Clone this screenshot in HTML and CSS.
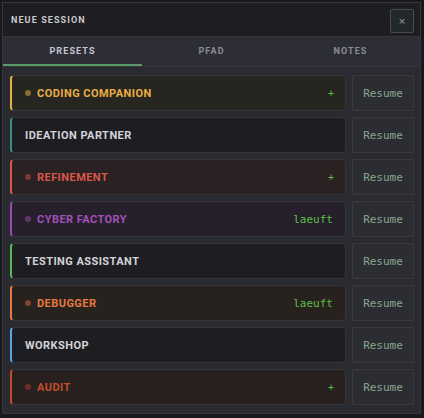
FILE: index.html
```html
<!DOCTYPE html>
<html lang="de">
<head>
<meta charset="utf-8">
<title>Neue Session</title>
<link rel="stylesheet" href="styles.css">
</head>
<body>
<div class="backdrop">
  <section class="modal">
    <header class="modal-head">
      <h2 class="modal-title">NEUE SESSION</h2>
      <button class="close-btn" aria-label="Schliessen">×</button>
    </header>
    <nav class="tabs">
      <div class="tab active">PRESETS</div>
      <div class="tab">PFAD</div>
      <div class="tab">NOTES</div>
    </nav>
    <div class="preset-list">
      <div class="row">
        <div class="card c-yellow"><span class="dot"></span><span class="name">CODING COMPANION</span><span class="status plus">+</span></div>
        <button class="resume">Resume</button>
      </div>
      <div class="row">
        <div class="card c-teal"><span class="name">IDEATION PARTNER</span></div>
        <button class="resume">Resume</button>
      </div>
      <div class="row">
        <div class="card c-red"><span class="dot"></span><span class="name">REFINEMENT</span><span class="status plus">+</span></div>
        <button class="resume">Resume</button>
      </div>
      <div class="row">
        <div class="card c-purple"><span class="dot"></span><span class="name">CYBER FACTORY</span><span class="status">laeuft</span></div>
        <button class="resume">Resume</button>
      </div>
      <div class="row">
        <div class="card c-green"><span class="name">TESTING ASSISTANT</span></div>
        <button class="resume">Resume</button>
      </div>
      <div class="row">
        <div class="card c-orange"><span class="dot"></span><span class="name">DEBUGGER</span><span class="status">laeuft</span></div>
        <button class="resume">Resume</button>
      </div>
      <div class="row">
        <div class="card c-blue"><span class="name">WORKSHOP</span></div>
        <button class="resume">Resume</button>
      </div>
      <div class="row">
        <div class="card c-rust"><span class="dot"></span><span class="name">AUDIT</span><span class="status plus">+</span></div>
        <button class="resume">Resume</button>
      </div>
    </div>
  </section>
</div>
</body>
</html>
```
FILE: styles.css
```css
* { box-sizing: border-box; }

html, body {
  margin: 0;
  height: 100%;
  background: #18191c;
}

body {
  font-family: Roboto, "Liberation Sans", sans-serif;
  overflow: hidden;
}

.backdrop {
  padding: 2px 3px 4px 2px;
  height: 100%;
}

.modal {
  height: 100%;
  display: flex;
  flex-direction: column;
  background: #2a2b31;
  border: 1px solid #36373d;
}

.modal-head {
  height: 34px;
  flex: none;
  display: flex;
  align-items: center;
  justify-content: space-between;
  padding: 0 6px 0 8px;
  background: #1d1d22;
  border-bottom: 1px solid #34353b;
}

.modal-title {
  margin: 0;
  font-size: 9px;
  font-weight: 700;
  letter-spacing: 1.1px;
  color: #c9c9ce;
}

.close-btn {
  width: 24px;
  height: 24px;
  padding: 0;
  margin-top: 2px;
  border: 1px solid #474b50;
  border-radius: 2px;
  background: #22272a;
  color: #9fa4a8;
  font-family: "DejaVu Sans", sans-serif;
  font-size: 9px;
  line-height: 22px;
}

.tabs {
  flex: none;
  display: grid;
  grid-template-columns: repeat(3, 1fr);
  height: 30px;
  background: #2d2e35;
  border-bottom: 1px solid #35363c;
}

.tab {
  display: flex;
  align-items: center;
  justify-content: center;
  font-size: 9px;
  font-weight: 700;
  letter-spacing: 1.1px;
  color: #8b8c97;
  border-bottom: 2px solid transparent;
}

.tab.active {
  color: #c6c7cf;
  border-bottom-color: #5b9a66;
}

.preset-list {
  flex: 1;
  display: flex;
  flex-direction: column;
  gap: 6px;
  padding: 8px 6px 0 7px;
}

.row {
  display: flex;
  gap: 6px;
  height: 36px;
}

.card {
  flex: 1;
  display: flex;
  align-items: center;
  padding: 0 12px 0 13px;
  border: 1px solid #34353b;
  border-left: 2px solid;
  border-radius: 4px;
  background: #1e1e22;
}

.dot {
  width: 6px;
  height: 6px;
  border-radius: 50%;
  margin-right: 6px;
  flex: none;
}

.name {
  font-size: 11px;
  font-weight: 700;
  letter-spacing: 0.45px;
  color: #d3d3d8;
}

.status {
  margin-left: auto;
  font-family: "DejaVu Sans Mono", "Liberation Mono", monospace;
  font-size: 11px;
  color: #5dbe45;
}

.status.plus {
  font-size: 10px;
  margin-right: -1px;
}

.resume {
  width: 62px;
  flex: none;
  padding: 0;
  border: 1px solid #393a40;
  border-radius: 1px;
  background: #2c2d33;
  color: #88a58e;
  font-family: "DejaVu Sans Mono", "Liberation Mono", monospace;
  font-size: 11px;
}

.c-yellow { border-left-color: #e8b04a; background: #27251f; }
.c-yellow .dot { background: #8a6d34; }
.c-yellow .name { color: #e7ad46; }

.c-teal { border-left-color: #3a8f84; }

.c-red { border-left-color: #d85a47; background: #2a2123; }
.c-red .dot { background: #7e3631; }
.c-red .name { color: #d9574a; }

.c-purple { border-left-color: #9a49b0; background: #25202c; }
.c-purple .dot { background: #5f3468; }
.c-purple .name { color: #a34fb8; }

.c-green { border-left-color: #5bb85c; }

.c-orange { border-left-color: #e57a41; background: #28221f; }
.c-orange .dot { background: #83462b; }
.c-orange .name { color: #e67a3f; }

.c-blue { border-left-color: #56a6e2; }

.c-rust { border-left-color: #bf4d2b; background: #27201f; }
.c-rust .dot { background: #6d2f24; }
.c-rust .name { color: #c24c2c; }
```
